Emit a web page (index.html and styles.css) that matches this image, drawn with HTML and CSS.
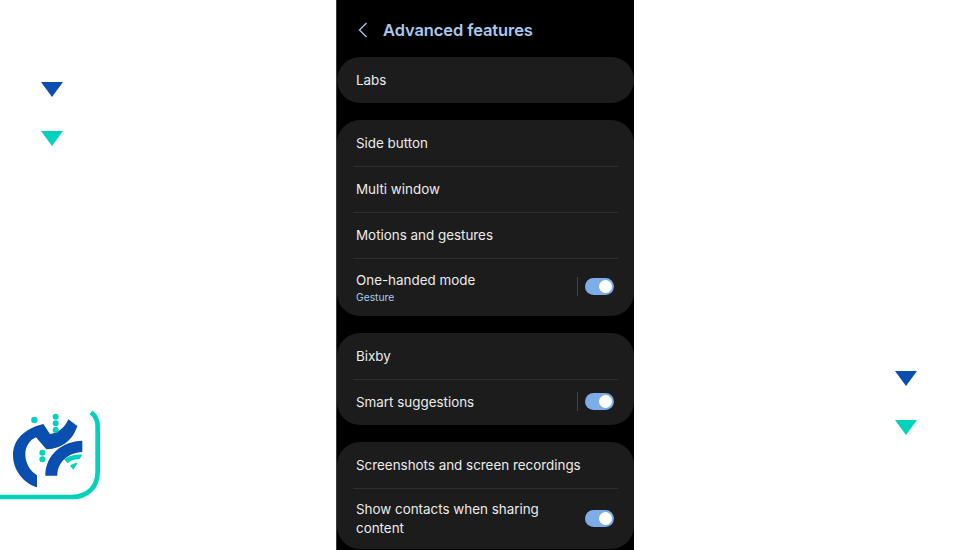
FILE: index.html
```html
<!DOCTYPE html>
<html lang="en">
<head>
<meta charset="utf-8">
<title>Advanced features</title>
<link rel="stylesheet" href="styles.css">
</head>
<body>
<svg class="tri tri-blue-l" viewBox="0 0 22 15"><path d="M0 0H22L11 15Z" fill="#0a4eb0"/></svg>
<svg class="tri tri-teal-l" viewBox="0 0 22 15"><path d="M0 0H22L11 15Z" fill="#00d2bb"/></svg>
<svg class="tri tri-blue-r" viewBox="0 0 22 15"><path d="M0 0H22L11 15Z" fill="#0a4eb0"/></svg>
<svg class="tri tri-teal-r" viewBox="0 0 22 15"><path d="M0 0H22L11 15Z" fill="#00d2bb"/></svg>
<svg class="logo" viewBox="0 0 330 315">
  <path d="M-2 291H215C262 291 293 262 293 215V80C293 62 285 46 273 37" fill="none" stroke="#00d2bb" stroke-width="14"/>
  <path d="M130 72C72 86 39 120 39 165C39 212 72 250 111 262V226C92 214 76 192 76 163C76 138 90 120 108 112L139 148C190 146 220 116 232 78L205 58C195 83 172 100 150 102L130 72Z" fill="#0a4eb0"/>
  <path d="M136 227H172C172 186 205 158 247 156V122C185 124 136 165 136 227Z" fill="#0a4eb0"/>
  <path d="M192 178C208 167 226 162 247 164L238 178C224 177 212 181 203 190Z" fill="#00d2bb"/>
  <path d="M210 197C217 191 224 189 233 188L220 209Z" fill="#00d2bb"/>
  <g fill="#00d2bb">
    <circle cx="103" cy="60" r="9.5"/><circle cx="167" cy="50" r="9"/><circle cx="167" cy="70" r="9"/><circle cx="167" cy="90" r="9"/><circle cx="127" cy="158" r="9"/><circle cx="127" cy="178" r="9"/>
  </g>
</svg>
<main class="phone">
  <header class="head">
    <svg class="back" viewBox="0 0 10 16"><path d="M8.5 1L1.5 8L8.5 15" fill="none" stroke="#a9c8ee" stroke-width="1.3"/></svg>
    <h1 class="title">Advanced features</h1>
  </header>
  <section class="card">
    <div class="row"><span class="label">Labs</span></div>
  </section>
  <section class="card">
    <div class="row"><span class="label">Side button</span></div>
    <div class="row"><span class="label">Multi window</span></div>
    <div class="row"><span class="label">Motions and gestures</span></div>
    <div class="row row-tall">
      <div class="text"><span class="label">One-handed mode</span><span class="sub">Gesture</span></div>
      <span class="vline"></span><span class="toggle"></span>
    </div>
  </section>
  <section class="card">
    <div class="row"><span class="label">Bixby</span></div>
    <div class="row">
      <div class="text"><span class="label">Smart suggestions</span></div>
      <span class="vline"></span><span class="toggle"></span>
    </div>
  </section>
  <section class="card card-last">
    <div class="row"><span class="label">Screenshots and screen recordings</span></div>
    <div class="row row-wrap">
      <div class="text"><span class="label label-wrap">Show contacts when sharing content</span></div>
      <span class="toggle"></span>
    </div>
  </section>
</main>
</body>
</html>
```
FILE: styles.css
```css
* { box-sizing: border-box; }
html, body { margin: 0; height: 100%; }
body { background: #fff; overflow: hidden; position: relative; font-family: Inter, "Noto Sans", sans-serif; }
.tri { position: absolute; width: 22px; height: 15px; }
.tri-blue-l { left: 41px; top: 82px; }
.tri-teal-l { left: 41px; top: 131px; }
.tri-blue-r { left: 895px; top: 371px; }
.tri-teal-r { left: 895px; top: 420px; }
.logo { position: absolute; left: 0; top: 400px; width: 110px; height: 105px; }
.phone { width: 298px; height: 550px; margin-left: 336px; background: #000; border-left: 1px solid #3a3a3a; overflow: hidden; display: flex; flex-direction: column; gap: 17px; }
.head { height: 40px; flex: none; display: flex; align-items: center; padding: 20px 0 0 21px; gap: 15px; }
.back { width: 10px; height: 16px; flex: none; }
.title { margin: 0; font-size: 16.5px; line-height: 20px; font-weight: 600; color: #a9c8ee; letter-spacing: -0.1px; }
.card { background: #1c1c1c; border-radius: 23px; padding: 0 16px; flex: none; }
.row { height: 46px; display: flex; align-items: center; padding: 0 4px 0 3px; border-top: 1px solid #2f2f2f; }
.card .row:first-child { border-top: 0; }
.row-tall { height: 58px; }
.row-wrap { height: 61px; }
.text { flex: 1; display: flex; flex-direction: column; min-width: 0; }
.label { font-size: 13.4px; color: #ececec; line-height: 19px; }
.label-wrap { display: block; width: 205px; }
.sub { font-size: 10.3px; color: #a9c8ee; line-height: 14px; }
.vline { width: 1px; height: 19px; background: #444; margin-right: 7px; margin-bottom: 2px; }
.toggle { width: 29px; height: 17px; margin-bottom: 2px; border-radius: 9px; background: #7cade8; position: relative; flex: none; }
.toggle::after { content: ""; position: absolute; right: 2px; top: 2px; width: 13px; height: 13px; border-radius: 50%; background: #fff; }
```
